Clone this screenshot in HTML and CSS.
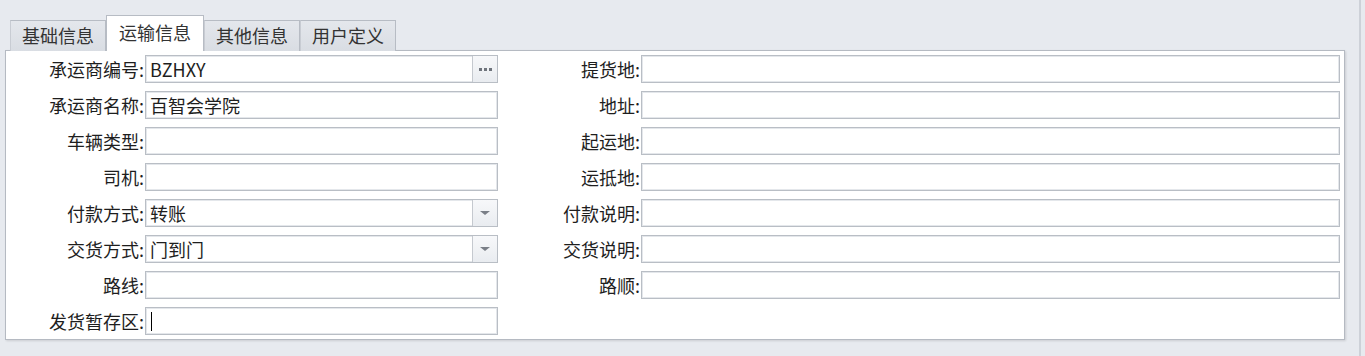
FILE: index.html
```html
<!DOCTYPE html>
<html lang="zh">

<head>
    <meta charset="UTF-8">
    <title>运输信息</title>
    <link rel="stylesheet" href="styles.css">
</head>

<body>
    <div class="page">
        <div class="tabs">
            <div class="tab">基础信息</div>
            <div class="tab active">运输信息</div>
            <div class="tab">其他信息</div>
            <div class="tab">用户定义</div>
        </div>
        <div class="panel">
            <label>承运商编号:</label>
            <div class="field"><span class="val">BZHXY</span><span class="btn"><i></i><i></i><i></i></span></div>
            <label>提货地:</label>
            <div class="field"></div>

            <label>承运商名称:</label>
            <div class="field"><span class="val">百智会学院</span></div>
            <label>地址:</label>
            <div class="field"></div>

            <label>车辆类型:</label>
            <div class="field"></div>
            <label>起运地:</label>
            <div class="field"></div>

            <label>司机:</label>
            <div class="field"></div>
            <label>运抵地:</label>
            <div class="field"></div>

            <label>付款方式:</label>
            <div class="field"><span class="val">转账</span><span class="btn"><span class="arrow"></span></span></div>
            <label>付款说明:</label>
            <div class="field"></div>

            <label>交货方式:</label>
            <div class="field"><span class="val">门到门</span><span class="btn"><span class="arrow"></span></span></div>
            <label>交货说明:</label>
            <div class="field"></div>

            <label>路线:</label>
            <div class="field"></div>
            <label>路顺:</label>
            <div class="field"></div>

            <label>发货暂存区:</label>
            <div class="field"><span class="caret"></span></div>
        </div>
    </div>
</body>

</html>
```

FILE: styles.css
```css
body {
    margin: 0;
    background: #e7eaef;
    font-family: "Noto Sans CJK SC", "Microsoft YaHei", sans-serif;
    font-size: 18px;
    color: #1e1e1e;
}

.page {
    width: 1361px;
    height: 356px;
    box-sizing: border-box;
    padding: 15px 0 0 5px;
    border-right: 2px solid #cdd1d8;
}

.tabs {
    display: flex;
    align-items: flex-end;
    margin-left: 5px;
    height: 36px;
    position: relative;
    z-index: 1;
}

.tab {
    height: 31px;
    box-sizing: border-box;
    padding: 0 11px;
    line-height: 29px;
    background: linear-gradient(#e4e7ec, #d9dde3);
    border: 1px solid #b7bcc4;
    border-bottom: none;
    border-left-color: #c8ccd3;
    color: #333;
    white-space: nowrap;
}

.tab.active {
    height: 36px;
    line-height: 33px;
    background: #fff;
    padding: 0 12px;
    border-color: #b7bcc4;
}

.panel {
    width: 1340px;
    height: 290px;
    box-sizing: border-box;
    margin-top: -1px;
    background: #fff;
    border: 1px solid #b5bac2;
    box-shadow: 1px 1px 2px rgba(0, 0, 0, 0.12);
    padding: 4px 4px 0 0;
    display: grid;
    grid-template-columns: 139px 353px 143px 699px;
    grid-auto-rows: 28px;
    row-gap: 8px;
}

label {
    text-align: right;
    line-height: 28px;
    padding-right: 1px;
    white-space: nowrap;
}

.field {
    display: flex;
    border: 1px solid #b9bec5;
    box-shadow: inset 0 0 0 1px #e4e7eb;
    background: #fff;
    box-sizing: border-box;
    height: 28px;
}

.val {
    flex: 1;
    line-height: 26px;
    padding-left: 4px;
}

.btn {
    width: 24px;
    margin-left: auto;
    border-left: 1px solid #c5c9cf;
    background: linear-gradient(#f7f8fa, #e9ecf0);
    display: flex;
    align-items: center;
    justify-content: center;
    gap: 2px;
}

.btn i {
    width: 3px;
    height: 3px;
    background: #6f747c;
}

.arrow {
    width: 0;
    height: 0;
    border-left: 5px solid transparent;
    border-right: 5px solid transparent;
    border-top: 4px solid #7a7f87;
}

.caret {
    width: 1px;
    height: 19px;
    margin: 4px 0 0 5px;
    background: #000;
}
```
